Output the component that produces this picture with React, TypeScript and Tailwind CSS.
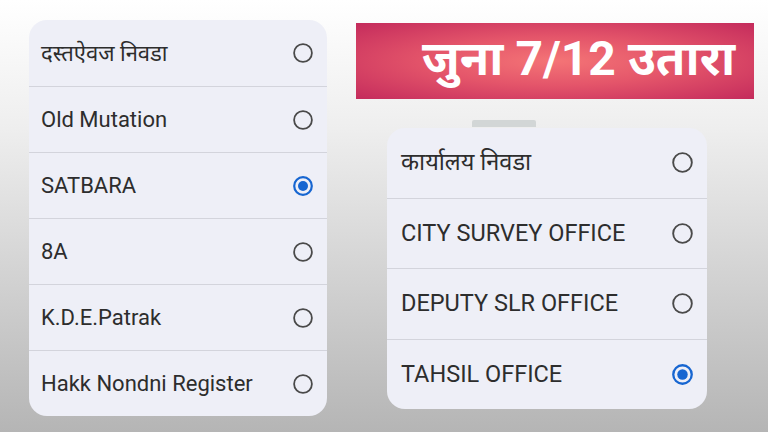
import React from "react";

const Radio = ({ checked, size = 20 }: { checked?: boolean; size?: number }) => (
  <svg width={size} height={size} viewBox="0 0 20 20" className="shrink-0">
    {checked ? (
      <>
        <circle cx="10" cy="10" r="8.8" fill="none" stroke="#1766d1" strokeWidth="2.2" />
        <circle cx="10" cy="10" r="5" fill="#1766d1" />
      </>
    ) : (
      <circle cx="10" cy="10" r="8.9" fill="none" stroke="#4a4a4a" strokeWidth="1.8" />
    )}
  </svg>
);

const left = [
  { t: "दस्तऐवज निवडा" },
  { t: "Old Mutation" },
  { t: "SATBARA", c: true },
  { t: "8A" },
  { t: "K.D.E.Patrak" },
  { t: "Hakk Nondni Register" },
];

const right = [
  { t: "कार्यालय निवडा" },
  { t: "CITY SURVEY OFFICE" },
  { t: "DEPUTY SLR OFFICE" },
  { t: "TAHSIL OFFICE", c: true },
];

export default function App() {
  return (
    <div
      className="w-[768px] h-[432px] overflow-hidden flex pl-[29px] pt-[20px] bg-[linear-gradient(to_bottom,#ffffff_0%,#eeeeee_30%,#b5b5b5_100%)]"
      style={{ fontFamily: "Roboto, 'Noto Sans', 'Noto Sans Devanagari', sans-serif" }}
    >
      <div className="w-[298px] h-[396px] rounded-[18px] bg-[#eeeff7] flex flex-col overflow-hidden">
        {left.map((r, i) => (
          <div
            key={i}
            className={`h-[66px] flex items-center justify-between pl-[12px] pr-[14px] ${i > 0 ? "border-t border-[#d3d4dc]" : ""}`}
          >
            <span className="text-[22px] text-[#2d2d2d]">{r.t}</span>
            <Radio checked={r.c} />
          </div>
        ))}
      </div>
      <div className="ml-[29px] pt-[3px] flex flex-col">
        <div className="w-[398px] h-[76px] flex items-center justify-end pr-[19px] pb-[4px] bg-[radial-gradient(ellipse_at_center,#f47476_0%,#e4556a_45%,#c42b5c_100%)]">
          <span className="text-[48px] font-bold text-white leading-none">जुना 7/12 उतारा</span>
        </div>
        <div className="mt-[21px] ml-[116px] w-[64px] h-[7px] bg-[#d2d6d6] rounded-t-[2px]" />
        <div className="mt-[1px] ml-[31px] w-[320px] h-[281px] rounded-[18px] bg-[#eeeff7] flex flex-col overflow-hidden">
          {right.map((r, i) => (
            <div
              key={i}
              className={`flex-1 flex items-center justify-between pl-[14px] pr-[14px] ${i > 0 ? "border-t border-[#d3d4dc]" : ""}`}
            >
              <span className="text-[23.5px] text-[#2d2d2d]">{r.t}</span>
              <Radio checked={r.c} size={21} />
            </div>
          ))}
        </div>
      </div>
    </div>
  );
}
